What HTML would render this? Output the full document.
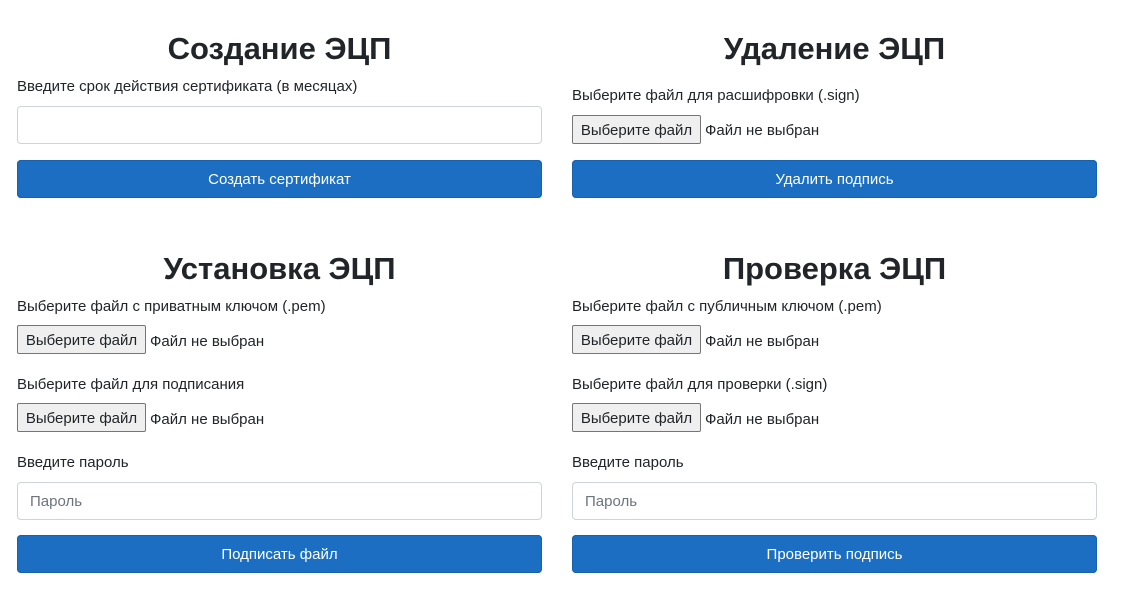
<!DOCTYPE html>
<html><head><meta charset="utf-8"><style>
body{margin:0;width:1131px;height:600px;background:#fff;font-family:"Liberation Sans","DejaVu Sans",sans-serif;color:#212529;position:relative;overflow:hidden}
h1{position:absolute;margin:0;font-size:31px;font-weight:bold;text-align:center;width:525px;line-height:40px}
.l{position:absolute;font-size:15px;line-height:20px;white-space:nowrap}
.in{position:absolute;width:523px;height:36px;border:1px solid #ced4da;border-radius:4px;background:#fff}
.in span{position:absolute;left:12px;top:10px;font-size:15px;color:#6c757d}
.btn{position:absolute;width:525px;height:38px;background:#1b6ec2;border-radius:4px;color:#fff;font-size:15px;text-align:center;line-height:40px;box-shadow:inset 0 0 0 1px #1861ac}
.fb{position:absolute;width:127px;height:27px;border:1px solid #767676;background:#efefef;border-radius:2px;font-size:15px;line-height:30px;text-align:center}
.ft{position:absolute;font-size:15px;line-height:29px}
</style></head><body>
<h1 style="left:17px;top:29px">Создание ЭЦП</h1>
<div class="l" style="left:17px;top:77px">Введите срок действия сертификата (в месяцах)</div>
<div class="in" style="left:17px;top:106px"></div>
<div class="btn" style="left:17px;top:160px">Создать сертификат</div>

<h1 style="left:572px;top:29px">Удаление ЭЦП</h1>
<div class="l" style="left:572px;top:86px">Выберите файл для расшифровки (.sign)</div>
<div class="fb" style="left:572px;top:115px">Выберите файл</div><div class="ft" style="left:705px;top:116px">Файл не выбран</div>
<div class="btn" style="left:572px;top:160px">Удалить подпись</div>

<h1 style="left:17px;top:249px">Установка ЭЦП</h1>
<div class="l" style="left:17px;top:297px">Выберите файл с приватным ключом (.pem)</div>
<div class="fb" style="left:17px;top:325px">Выберите файл</div><div class="ft" style="left:150px;top:327px">Файл не выбран</div>
<div class="l" style="left:17px;top:375px">Выберите файл для подписания</div>
<div class="fb" style="left:17px;top:403px">Выберите файл</div><div class="ft" style="left:150px;top:405px">Файл не выбран</div>
<div class="l" style="left:17px;top:453px">Введите пароль</div>
<div class="in" style="left:17px;top:482px"><span>Пароль</span></div>
<div class="btn" style="left:17px;top:535px">Подписать файл</div>

<h1 style="left:572px;top:249px">Проверка ЭЦП</h1>
<div class="l" style="left:572px;top:297px">Выберите файл с публичным ключом (.pem)</div>
<div class="fb" style="left:572px;top:325px">Выберите файл</div><div class="ft" style="left:705px;top:327px">Файл не выбран</div>
<div class="l" style="left:572px;top:375px">Выберите файл для проверки (.sign)</div>
<div class="fb" style="left:572px;top:403px">Выберите файл</div><div class="ft" style="left:705px;top:405px">Файл не выбран</div>
<div class="l" style="left:572px;top:453px">Введите пароль</div>
<div class="in" style="left:572px;top:482px"><span>Пароль</span></div>
<div class="btn" style="left:572px;top:535px">Проверить подпись</div>
</body></html>
